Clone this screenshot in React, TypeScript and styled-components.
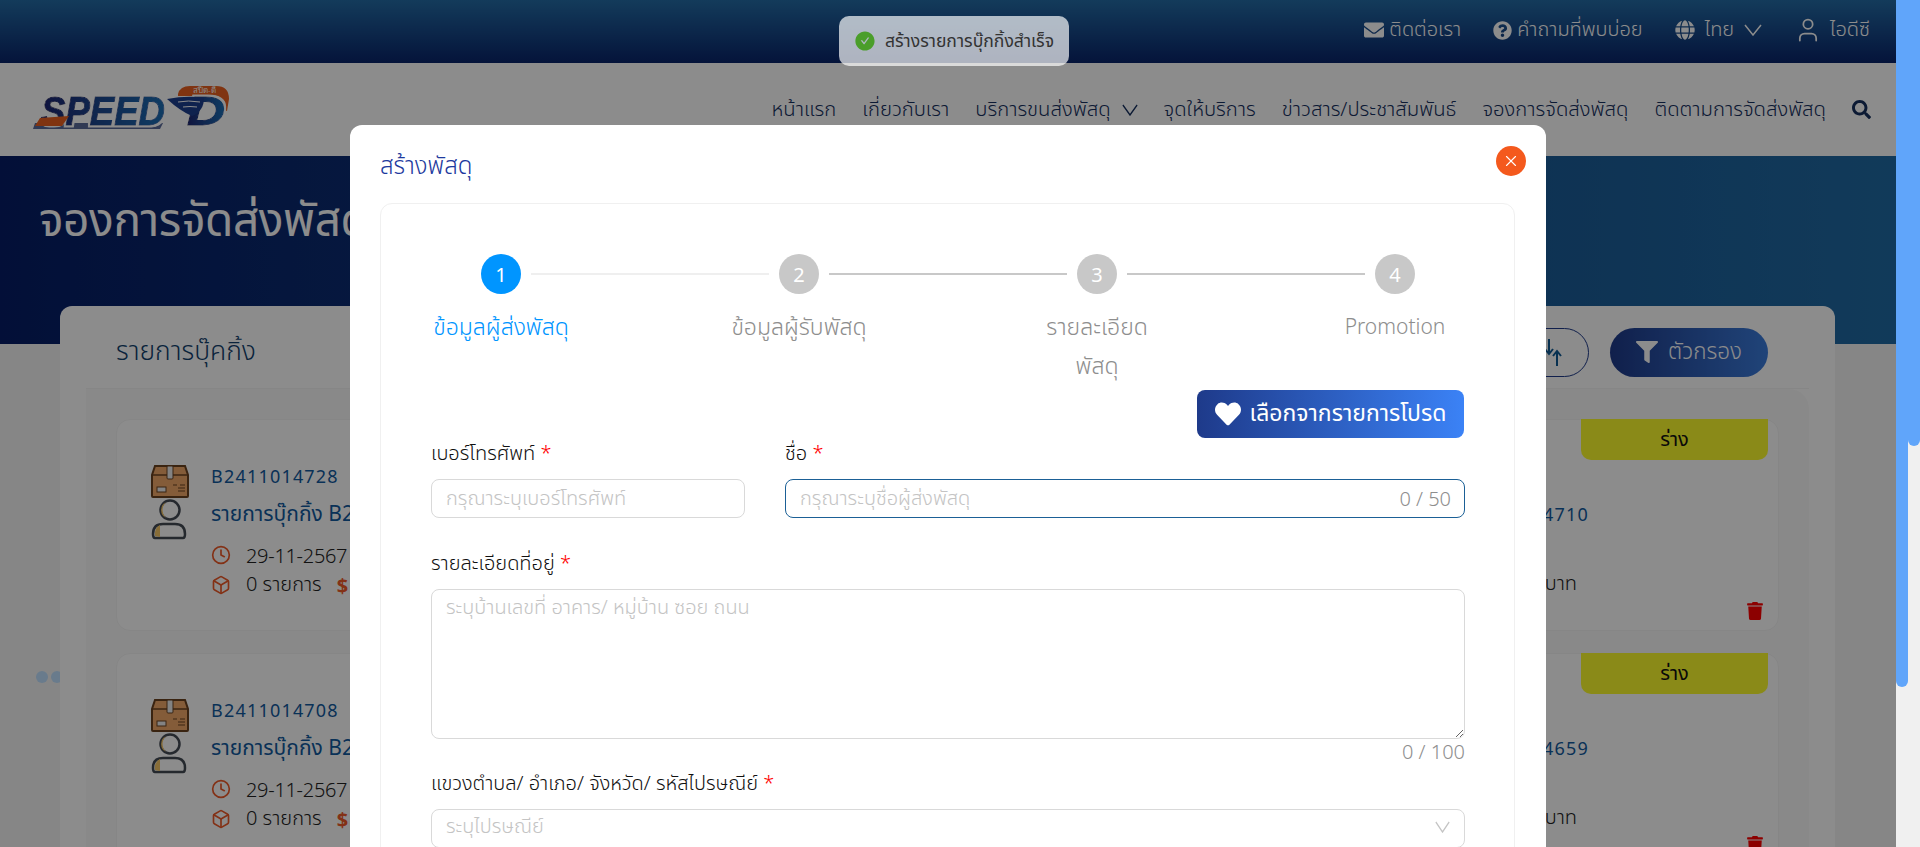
import React from "react";
import styled, { createGlobalStyle } from "styled-components";
import { FaEnvelope, FaQuestionCircle, FaGlobe, FaSearch, FaFilter, FaTrash, FaHeart } from "react-icons/fa";
import { AiFillCheckCircle } from "react-icons/ai";
import { Clock, Box, User, X } from "lucide-react";

const GlobalStyle = createGlobalStyle`
  * { box-sizing: border-box; }
  html, body { margin: 0; height: 100%; overflow: hidden; }
  body {
    font-family: "Noto Sans", "Noto Sans Thai", "Open Sans", sans-serif;
    font-weight: 300;
    font-stretch: 85%;
    background: #f5f5f5;
  }
  input::placeholder, textarea::placeholder { color: #c4c4c4; }
`;

const Shell = styled.div`
  display: flex;
  width: 1920px;
  height: 847px;
  overflow: hidden;
`;

const Viewport = styled.div`
  position: relative;
  flex: 1;
  height: 100%;
  overflow: hidden;
  background: #f4f4f4;
`;

const ScrollTrack = styled.div`
  width: 12px;
  height: 100%;
  background: #f0f0f0;
`;

const ScrollThumb = styled.div<{ $height: number }>`
  height: ${(p) => p.$height}px;
  background: #60a5fa;
  border-radius: 0 0 6px 6px;
`;

const TopBar = styled.div`
  display: flex;
  justify-content: flex-end;
  align-items: center;
  gap: 32px;
  height: 63px;
  padding: 0 26px 3px 0;
  background: linear-gradient(180deg, #246ca6 0%, #09246a 100%);
  color: #fff;
  font-size: 20px;
`;

const TopItem = styled.div<{ $gap?: number }>`
  display: flex;
  align-items: center;
  gap: ${(p) => p.$gap ?? 5}px;
`;

const NavBar = styled.div`
  display: flex;
  align-items: center;
  justify-content: space-between;
  height: 93px;
  padding: 0 25px 0 32px;
  background: #fff;
`;

const LogoMark = styled.svg`
  margin-top: 3px;
`;

const NavLinks = styled.nav`
  display: flex;
  align-items: center;
  gap: 26px;
  color: #16305f;
  font-size: 20.3px;
`;

const NavLink = styled.span`
  display: flex;
  align-items: center;
  gap: 11px;
`;

const Hero = styled.div`
  height: 188px;
  padding: 32px 39px;
  background: linear-gradient(90deg, #061d66 0%, #206ba4 100%);
  color: #fff;
  font-size: 46px;
  font-weight: 400;
  letter-spacing: -0.4px;
  line-height: 60px;
`;

const Dots = styled.div`
  position: absolute;
  left: 36px;
  top: 671px;
  display: flex;
  gap: 3px;
`;

const Dot = styled.span`
  width: 12px;
  height: 12px;
  border-radius: 50%;
  background: #c0e0ff;
`;

const Panel = styled.section`
  position: relative;
  margin: -38px 0 0 60px;
  width: 1775px;
  background: #fff;
  border-radius: 12px 12px 0 0;
`;

const PanelHead = styled.div`
  display: flex;
  align-items: center;
  justify-content: space-between;
  height: 83px;
  margin: 0 26px;
  padding: 22px 41px 12px 30px;
  border-bottom: 1px solid #f4f4f4;
  font-size: 26.5px;
  color: #123f6e;
`;

const HeadActions = styled.div`
  display: flex;
  gap: 21px;
`;

const SortButton = styled.button`
  display: flex;
  align-items: center;
  justify-content: flex-end;
  width: 120px;
  height: 49px;
  padding: 0 26px 0 0;
  background: transparent;
  border: 1px solid #1e3a8a;
  border-radius: 25px;
  color: #0f5a94;
`;

const FilterButton = styled.button`
  display: flex;
  align-items: center;
  justify-content: center;
  gap: 10px;
  width: 158px;
  height: 49px;
  border: 0;
  border-radius: 25px;
  background: linear-gradient(90deg, #1e3a8a, #3b7cdc);
  color: #fff;
  font: inherit;
  font-size: 22.5px;
`;

const CardList = styled.div`
  display: flex;
  flex-direction: column;
  gap: 22px;
  margin: 0 26px;
  padding: 30px 30px 0;
  background: #fafafa;
  border-radius: 0 20px 0 0;
`;

const Card = styled.article`
  position: relative;
  display: flex;
  justify-content: space-between;
  flex: none;
  height: 212px;
  padding: 44px 189px 0 34px;
  background: #fff;
  border: 1px solid #f4f4f4;
  border-radius: 14px;
`;

const CardMain = styled.div`
  display: flex;
  gap: 22px;
`;

const CardInfo = styled.div`
  display: flex;
  flex-direction: column;
  font-size: 20px;
  color: #222;
`;

const BookingId = styled.div`
  height: 24px;
  line-height: 24px;
  font-size: 18px;
  color: #125a9e;
  font-weight: 400;
  letter-spacing: 1.2px;
`;

const BookingTitle = styled.div`
  margin-top: 11px;
  height: 28px;
  line-height: 28px;
  font-size: 21px;
  font-weight: 400;
  color: #125a9e;
`;

const MetaRow = styled.div`
  display: flex;
  align-items: center;
  gap: 15px;
  height: 30px;
  color: #222;
  svg { color: #ef5a28; }
`;

const ClockRow = styled(MetaRow)`
  margin-top: 13px;
  letter-spacing: -0.3px;
`;

const Dollar = styled.b`
  color: #ef5a28;
  font-weight: 700;
`;

const CardSide = styled.div`
  display: flex;
  flex-direction: column;
  align-items: flex-end;
  padding-top: 38px;
  font-size: 20px;
  color: #222;
`;

const Tracking = styled.div`
  height: 24px;
  line-height: 24px;
  font-size: 18px;
  color: #125a9e;
  font-weight: 400;
  letter-spacing: 1.2px;
`;

const Price = styled.div`
  margin: 45px 12px 0 0;
  height: 24px;
  line-height: 24px;
`;

const StatusBadge = styled.div`
  position: absolute;
  top: -1px;
  right: 10px;
  width: 187px;
  height: 41px;
  display: flex;
  align-items: center;
  justify-content: center;
  background: #fbfb2c;
  border-radius: 0 0 10px 10px;
  color: #111;
  font-size: 20px;
  font-weight: 400;
`;

const TrashButton = styled.span`
  position: absolute;
  right: 14px;
  bottom: 10px;
  display: flex;
  color: #ff0000;
`;

const Mask = styled.div`
  position: absolute;
  inset: 0;
  background: rgba(0, 0, 0, 0.45);
`;

const Toast = styled.div`
  position: absolute;
  top: 16px;
  left: 839px;
  display: flex;
  align-items: center;
  gap: 9px;
  height: 50px;
  width: 230px;
  padding: 0 15px;
  border-radius: 10px;
  background: rgba(255, 255, 255, 0.68);
  color: #333;
  font-size: 17.6px;
  font-weight: 400;
  white-space: nowrap;
  svg { color: #4a9e2a; }
`;

const ModalLayer = styled.div`
  position: absolute;
  inset: 125px 0 0 350px;
`;

const Modal = styled.div`
  width: 1196px;
  height: 900px;
  padding: 21px 20px 24px 30px;
  background: #fff;
  border-radius: 12px 12px 0 0;
`;

const ModalHead = styled.div`
  display: flex;
  justify-content: space-between;
  height: 30px;
  margin-bottom: 27px;
`;

const ModalTitle = styled.h2`
  margin: 0;
  padding-top: 2px;
  font-size: 24px;
  font-weight: 300;
  line-height: 34px;
  color: #1e3a9e;
`;

const CloseButton = styled.span`
  display: flex;
  align-items: center;
  justify-content: center;
  width: 30px;
  height: 30px;
  border-radius: 50%;
  background: #f4591d;
  color: #fff;
`;

const FormCard = styled.div`
  width: 1135px;
  height: 800px;
  padding: 50px 50px 0;
  border: 1px solid #f0f0f0;
  border-radius: 12px;
`;

const Steps = styled.div`
  display: flex;
  height: 136px;
`;

const Step = styled.div`
  flex: none;
  width: 298px;
  display: flex;
  flex-direction: column;
`;

const StepHead = styled.div`
  display: flex;
  align-items: center;
  height: 40px;
  padding-left: 50px;
`;

const StepCircle = styled.span<{ $active?: boolean }>`
  flex: none;
  display: flex;
  align-items: center;
  justify-content: center;
  width: 40px;
  height: 40px;
  border-radius: 50%;
  background: ${(p) => (p.$active ? "#0095ff" : "#c8c8c8")};
  color: #fff;
  font-size: 20px;
  font-weight: 400;
`;

const StepLine = styled.span<{ $done?: boolean }>`
  flex: none;
  width: 238px;
  height: 2px;
  margin: 0 10px;
  background: ${(p) => (p.$done ? "#efefef" : "#c8c8c8")};
`;

const StepLabel = styled.div<{ $active?: boolean; $latin?: boolean }>`
  width: 140px;
  margin: 13px 0 0 0;
  text-align: center;
  font-size: ${(p) => (p.$latin ? 21 : 23)}px;
  line-height: 39px;
  color: ${(p) => (p.$active ? "#0095ff" : "#8e8e8e")};
`;

const FavRow = styled.div`
  display: flex;
  justify-content: flex-end;
`;

const FavButton = styled.button`
  display: flex;
  align-items: center;
  justify-content: center;
  gap: 9px;
  width: 267px;
  height: 48px;
  padding-bottom: 2px;
  border: 0;
  border-radius: 8px;
  background: linear-gradient(90deg, #1e3a8a, #3b82f6);
  color: #fff;
  font: inherit;
  font-weight: 400;
  font-size: 23px;
`;

const FieldRow = styled.div`
  display: grid;
  grid-template-columns: 314px 680px;
  gap: 40px;
`;

const Field = styled.div<{ $top?: number }>`
  position: relative;
  display: flex;
  flex-direction: column;
  margin-top: ${(p) => p.$top ?? 0}px;
`;

const Label = styled.label`
  display: block;
  height: 41px;
  line-height: 30px;
  font-size: 20px;
  color: #111;
  em { color: #ff0000; font-style: normal; }
`;

const Input = styled.input<{ $focused?: boolean }>`
  width: 100%;
  height: 39px;
  padding: 0 14px 2px;
  border: 1px solid ${(p) => (p.$focused ? "#1b6096" : "#d9d9d9")};
  border-radius: 8px;
  background: #fff;
  outline: 0;
  font: inherit;
  font-size: 20px;
`;

const InlineCount = styled.span`
  position: absolute;
  right: 14px;
  bottom: 6px;
  color: #8e8e8e;
  font-size: 20px;
`;

const TextArea = styled.textarea`
  display: block;
  width: 1034px;
  height: 150px;
  padding: 3px 14px;
  border: 1px solid #d9d9d9;
  border-radius: 8px;
  font: inherit;
  font-size: 20px;
  outline: 0;
`;

const Count = styled.div`
  width: 1034px;
  height: 29px;
  line-height: 26px;
  text-align: right;
  color: #8e8e8e;
  font-size: 20px;
`;

const SelectBox = styled.div`
  display: flex;
  align-items: center;
  justify-content: space-between;
  width: 1034px;
  height: 39px;
  padding: 0 14px 3px;
  border: 1px solid #d9d9d9;
  border-radius: 8px;
  color: #c4c4c4;
  font-size: 20px;
`;

// thin wide V used by the dropdowns
const Chevron = ({ color = "currentColor", width = 18 }: { color?: string; width?: number }) => (
  <svg width={width} height="12" viewBox="0 0 18 12" preserveAspectRatio="none" fill="none">
    <path d="M1 1 L9 11 L17 1" stroke={color} strokeWidth="1.5" />
  </svg>
);

const SortIcon = () => (
  <svg width="18" height="27" viewBox="0 0 18 27" fill="none" stroke="currentColor" strokeWidth="2">
    <path d="M5 0 V14 M1 10 L5 15 L9 10" />
    <path d="M13 27 V13 M9 17 L13 12 L17 17" />
  </svg>
);

const Logo = () => (
  <LogoMark width="198" height="52" viewBox="0 0 198 52">
    <defs>
      <linearGradient id="speedFill" x1="0" x2="1" y1="0" y2="0">
        <stop offset="0" stopColor="#1b2470" />
        <stop offset="1" stopColor="#1d6fb5" />
      </linearGradient>
      <filter id="halo" x="-10%" y="-20%" width="120%" height="140%">
        <feMorphology in="SourceAlpha" operator="dilate" radius="1.5" result="grown" />
        <feFlood floodColor="#fff" />
        <feComposite in2="grown" operator="in" result="edge" />
        <feMerge>
          <feMergeNode in="edge" />
          <feMergeNode in="SourceGraphic" />
        </feMerge>
      </filter>
    </defs>
    <path d="M1 44 L128 44 L131 38 L3 38 Z" fill="#5a6a9a" />
    <path d="M146 9 Q148 1 158 1 H184 Q197 1 197 14 L195 26 L186 24 L188 14 Q188 11 182 11 H146 Z" fill="#e9601f" />
    <text x="161" y="8" fontFamily="Noto Sans" fontSize="8" fill="#fff">สปีด-ดี</text>
    <g filter="url(#halo)">
      <text x="9" y="40" fontFamily="Liberation Sans" fontWeight="700" fontStyle="italic" fontSize="41" textLength="124" lengthAdjust="spacingAndGlyphs" fill="url(#speedFill)" stroke="url(#speedFill)" strokeWidth="1">SPEED</text>
      <text x="155" y="40" fontFamily="Liberation Sans" fontWeight="700" fontStyle="italic" fontSize="41" textLength="38" lengthAdjust="spacingAndGlyphs" fill="url(#speedFill)" stroke="url(#speedFill)" strokeWidth="1">D</text>
    </g>
    <path d="M3 41 L30 41 L37 31 L8 33 Z" fill="#e9601f" />
    <path d="M135 14 Q156 10 172 13 Q172 26 160 31 Q148 26 135 14 Z" fill="#1d3f8f" />
    <path d="M146 17 Q156 15 168 17 M151 22 Q158 21 165 22" stroke="#fff" strokeWidth="1" fill="none" />
  </LogoMark>
);

const ParcelPersonIcon = () => (
  <svg width="38" height="76" viewBox="0 0 38 76">
    <path d="M4 2 H34 L37 11 V32 Q37 33 36 33 H2 Q1 33 1 32 V11 Z" fill="#f0a868" stroke="#6b4220" strokeWidth="2" />
    <path d="M1 11 H37" stroke="#6b4220" strokeWidth="1.5" />
    <rect x="16" y="2" width="6" height="13" rx="1" fill="#eeeeee" stroke="#6b4220" strokeWidth="1" />
    <rect x="6" y="23" width="9" height="5" fill="#eeeeee" stroke="#6b4220" strokeWidth="1" />
    <path d="M22 21 H26 M29 21 H34 M27 24 H34 M27 27 H34" stroke="#6b4220" strokeWidth="1" />
    <circle cx="19" cy="46" r="9.5" fill="#fff" stroke="#444b55" strokeWidth="2.5" />
    <path d="M15 38 A9 9 0 0 0 15 54 A11 11 0 0 1 15 38 Z" fill="#f6c766" />
    <path d="M4 74 Q2 74 2 70 Q2 60 12 60 H24 Q34 60 34 70 Q34 74 32 74 Z" fill="#fff" stroke="#444b55" strokeWidth="2.5" />
    <path d="M4 72 Q3 64 9 61 V73 Z" fill="#f6c766" />
  </svg>
);

type Booking = { id: string; tracking: string };

const bookings: Booking[] = [
  { id: "B2411014728", tracking: "SP2411014710" },
  { id: "B2411014708", tracking: "SP2411014659" },
];

const BookingCard = ({ id, tracking }: Booking) => (
  <Card>
    <CardMain>
      <ParcelPersonIcon />
      <CardInfo>
        <BookingId>{id}</BookingId>
        <BookingTitle>รายการบุ๊กกิ้ง {id}</BookingTitle>
        <ClockRow>
          <Clock size={20} />
          <span>29-11-2567</span>
        </ClockRow>
        <MetaRow>
          <Box size={20} />
          <span>0 รายการ</span>
          <Dollar>$</Dollar>
        </MetaRow>
      </CardInfo>
    </CardMain>
    <CardSide>
      <Tracking>{tracking}</Tracking>
      <Price>0 บาท</Price>
    </CardSide>
    <StatusBadge>ร่าง</StatusBadge>
    <TrashButton>
      <FaTrash size={18} />
    </TrashButton>
  </Card>
);

const stepTitles = ["ข้อมูลผู้ส่งพัสดุ", "ข้อมูลผู้รับพัสดุ", "รายละเอียดพัสดุ", "Promotion"];

export default function App() {
  return (
    <Shell>
      <GlobalStyle />
      <Viewport>
        <TopBar>
          <TopItem><FaEnvelope size={20} />ติดต่อเรา</TopItem>
          <TopItem><FaQuestionCircle size={19} />คำถามที่พบบ่อย</TopItem>
          <TopItem $gap={10}><FaGlobe size={20} />ไทย<Chevron /></TopItem>
          <TopItem $gap={8}><User size={28} strokeWidth={1.5} />ไอดีซี</TopItem>
        </TopBar>
        <NavBar>
          <Logo />
          <NavLinks>
            <NavLink>หน้าแรก</NavLink>
            <NavLink>เกี่ยวกับเรา</NavLink>
            <NavLink>บริการขนส่งพัสดุ<Chevron width={16} /></NavLink>
            <NavLink>จุดให้บริการ</NavLink>
            <NavLink>ข่าวสาร/ประชาสัมพันธ์</NavLink>
            <NavLink>จองการจัดส่งพัสดุ</NavLink>
            <NavLink>ติดตามการจัดส่งพัสดุ</NavLink>
            <FaSearch size={19} />
          </NavLinks>
        </NavBar>
        <Hero>จองการจัดส่งพัสดุ</Hero>
        <Dots><Dot /><Dot /></Dots>
        <Panel>
          <PanelHead>
            รายการบุ๊คกิ้ง
            <HeadActions>
              <SortButton><SortIcon /></SortButton>
              <FilterButton><FaFilter size={22} />ตัวกรอง</FilterButton>
            </HeadActions>
          </PanelHead>
          <CardList>
            {bookings.map((b) => <BookingCard key={b.id} {...b} />)}
          </CardList>
        </Panel>

        <Mask />
        <Toast><AiFillCheckCircle size={22} />สร้างรายการบุ๊กกิ้งสำเร็จ</Toast>

        <ModalLayer>
          <Modal>
            <ModalHead>
              <ModalTitle>สร้างพัสดุ</ModalTitle>
              <CloseButton><X size={18} strokeWidth={1.5} /></CloseButton>
            </ModalHead>
            <FormCard>
              <Steps>
                {stepTitles.map((title, i) => (
                  <Step key={title}>
                    <StepHead>
                      <StepCircle $active={i === 0}>{i + 1}</StepCircle>
                      {i < 3 && <StepLine $done={i === 0} />}
                    </StepHead>
                    <StepLabel $active={i === 0} $latin={i === 3}>{title}</StepLabel>
                  </Step>
                ))}
              </Steps>
              <FavRow>
                <FavButton><FaHeart size={26} />เลือกจากรายการโปรด</FavButton>
              </FavRow>
              <FieldRow>
                <Field>
                  <Label>เบอร์โทรศัพท์ <em>*</em></Label>
                  <Input placeholder="กรุณาระบุเบอร์โทรศัพท์" />
                </Field>
                <Field>
                  <Label>ชื่อ <em>*</em></Label>
                  <Input $focused placeholder="กรุณาระบุชื่อผู้ส่งพัสดุ" />
                  <InlineCount>0 / 50</InlineCount>
                </Field>
              </FieldRow>
              <Field $top={30}>
                <Label>รายละเอียดที่อยู่ <em>*</em></Label>
                <TextArea placeholder="ระบุบ้านเลขที่ อาคาร/ หมู่บ้าน ซอย ถนน" />
                <Count>0 / 100</Count>
              </Field>
              <Field>
                <Label>แขวงตำบล/ อำเภอ/ จังหวัด/ รหัสไปรษณีย์ <em>*</em></Label>
                <SelectBox>ระบุไปรษณีย์<Chevron color="#c4c4c4" width={15} /></SelectBox>
              </Field>
            </FormCard>
          </Modal>
        </ModalLayer>
      </Viewport>
      <ScrollTrack><ScrollThumb $height={687} /></ScrollTrack>
      <ScrollTrack><ScrollThumb $height={446} /></ScrollTrack>
    </Shell>
  );
}
